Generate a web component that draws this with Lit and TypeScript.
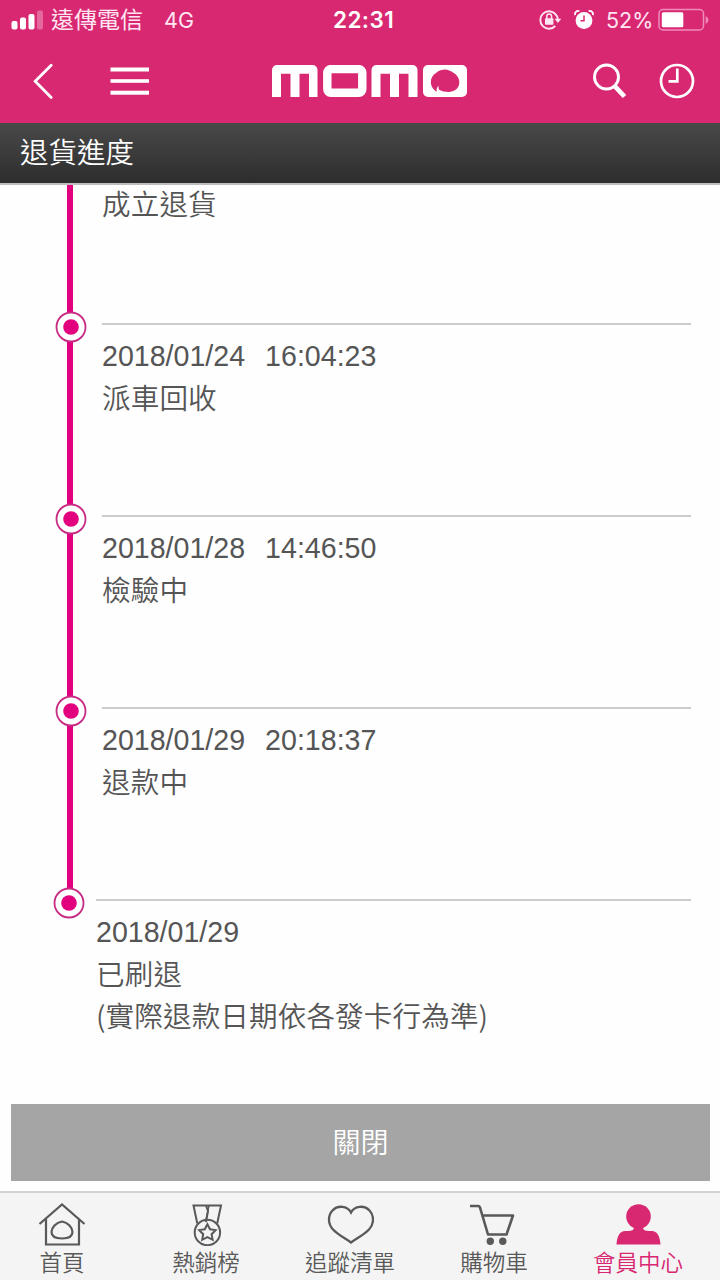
import { LitElement, html, css, svg, nothing } from "lit";
import { customElement, property } from "lit/decorators.js";

interface Step {
  date?: string;
  time?: string;
  lines: string[];
}

const STEPS: Step[] = [
  { lines: ["成立退貨"] },
  { date: "2018/01/24", time: "16:04:23", lines: ["派車回收"] },
  { date: "2018/01/28", time: "14:46:50", lines: ["檢驗中"] },
  { date: "2018/01/29", time: "20:18:37", lines: ["退款中"] },
  { date: "2018/01/29", lines: ["已刷退", "(實際退款日期依各發卡行為準)"] },
];

@customElement("status-bar")
class StatusBar extends LitElement {
  static styles = css`
    :host {
      display: grid;
      grid-template-columns: 333px 1fr auto;
      align-items: center;
      height: 40px;
      padding-right: 10px;
      color: #ffe6f2;
      font-family: Inter, "Noto Sans CJK TC", sans-serif;
      font-size: 22px;
      line-height: 40px;
      white-space: nowrap;
    }
    .left, .right { display: flex; align-items: center; height: 40px; }
    .left { padding-left: 11px; }
    .carrier { margin-left: 8px; font-size: 23px; line-height: 37px; height: 40px; font-family: "Noto Sans CJK TC", sans-serif; }
    .net { margin-left: 21px; font-size: 21.5px; }
    .clock { font-weight: 600; font-size: 22.5px; letter-spacing: 0.4px; color: #fff; }
    .lock { margin-right: 12px; }
    .alarm { margin-right: 12px; }
    .pct { width: 46px; margin-right: 6px; font-size: 21.5px; }
    svg { display: block; }
  `;
  render() {
    return html`
      <div class="left">
        <svg width="32" height="20" viewBox="0 0 32 20" fill="#fff">
          <rect x="0.5" y="11" width="6" height="8.5" rx="2" />
          <rect x="9" y="7.5" width="6" height="12" rx="2" />
          <rect x="17.5" y="4" width="6" height="15.5" rx="2" />
          <rect x="26" y="0.5" width="6" height="19" rx="2" opacity="0.3" />
        </svg>
        <span class="carrier">遠傳電信</span>
        <span class="net">4G</span>
      </div>
      <div class="clock">22:31</div>
      <div class="right">
        <svg class="lock" width="23" height="20" viewBox="0 0 23 20" fill="none" stroke="#ffe6f2" stroke-width="1.9">
          <path d="M16.5 4.2A8.7 8.7 0 1 0 16.3 16" />
          <path d="M16 3.8A8.7 8.7 0 0 1 18.8 9" />
          <path d="M15.5 8.8h6.8l-3.4 4.2z" fill="#ffe6f2" stroke="none" />
          <rect x="6" y="8.3" width="8.4" height="6.4" rx="0.6" fill="#ffe6f2" stroke="none" />
          <path d="M7.8 9V6.5a2.4 2.4 0 0 1 4.8 0V9" stroke-width="1.5" />
        </svg>
        <svg class="alarm" width="20" height="20" viewBox="0 0 20 20">
          <circle cx="10" cy="10.5" r="8.4" fill="#fff" />
          <path d="M1.3 5.2A3 3 0 0 1 5.4 1.3M18.7 5.2A3 3 0 0 0 14.6 1.3" fill="none" stroke="#fff" stroke-width="1.8" />
          <path d="M10 5.5v5.3H6.5" fill="none" stroke="#d82872" stroke-width="1.5" />
        </svg>
        <span class="pct">52%</span>
        <svg width="52" height="24" viewBox="0 0 52 24">
          <rect x="1" y="1.5" width="44.5" height="20.5" rx="4" fill="none" stroke="#f08abb" stroke-width="1.5" />
          <rect x="3.8" y="4.2" width="21.5" height="15" rx="1.5" fill="#fff" />
          <path d="M47.7 8v8q2.8-1.3 2.8-4t-2.8-4z" fill="#f08abb" />
        </svg>
      </div>
    `;
  }
}

@customElement("nav-bar")
class NavBar extends LitElement {
  static styles = css`
    :host { display: flex; align-items: center; height: 81px; padding: 0 25px 0 32px; box-sizing: border-box; }
    svg { display: block; flex: none; }
    .menu { margin-left: 56px; }
    .logo { margin-left: 122px; }
    .search { margin-left: auto; }
    .history { margin-left: 32px; }
  `;
  render() {
    return html`
      <svg width="22" height="38" viewBox="0 0 22 38" fill="none" stroke="#fff" stroke-width="2.8" stroke-linecap="round">
        <path d="M19.2 3.2 3.2 19.3 19.2 35.4" stroke-linejoin="miter" />
      </svg>
      <svg class="menu" width="40" height="30" viewBox="0 0 40 30" fill="#fff">
        <rect x="0.5" y="1.5" width="38.5" height="4" />
        <rect x="0.5" y="13.2" width="38.5" height="3.6" />
        <rect x="0.5" y="24.7" width="38.5" height="4" />
      </svg>
      <svg class="logo" width="195" height="32" viewBox="0 0 195 32" fill="#fff">
        <path d="M0 32V5a5 5 0 0 1 5-5H40.5a5 5 0 0 1 5 5V32H37V8.8H27.5V32H18.5V8.8H9V32z" />
        <path d="M99.5 32V5a5 5 0 0 1 5-5H140.500a5 5 0 0 1 5 5V32H136.5V8.8H127V32H118V8.8H108.5V32z" />
        <rect x="55.3" y="4.1" width="35" height="23.6" rx="3.5" fill="none" stroke="#fff" stroke-width="8.4" />
        <path fill-rule="evenodd"
          d="M156 0h34a5 5 0 0 1 5 5v22a5 5 0 0 1-5 5h-34a5 5 0 0 1-5-5v-22a5 5 0 0 1 5-5zM164.8 26.8C161.5 24.800 158.800 21.200 158.800 17C158.800 13 161 9.800 164 8C167 5.500 170 4.600 173 4.600C176 4.800 178.500 6 181 7.500C185 9.700 187.300 13 187.300 17.500C187.300 23.500 182 27 176.500 27C173.500 27 169 26.200 166.800 24.500C166.600 23.300 166.600 22 166.400 20.800C165 22.500 164.200 24.300 164.800 26.800z" />
      </svg>
      <svg class="search" width="34" height="36" viewBox="0 0 34 36" fill="none" stroke="#fff">
        <circle cx="13.5" cy="14" r="12" stroke-width="2.900" />
        <path d="M21.5 22.8 31.500 33.500" stroke-width="4.700" />
      </svg>
      <svg class="history" width="36" height="36" viewBox="0 0 36 36" fill="none" stroke="#fff">
        <circle cx="18" cy="18" r="16" stroke-width="2.700" />
        <path d="M18.300 5.500V18.300H9.500" stroke-width="2.700" />
      </svg>
    `;
  }
}

@customElement("progress-step")
class ProgressStep extends LitElement {
  @property({ attribute: false }) step: Step = { lines: [] };
  @property({ type: Boolean, reflect: true }) first = false;
  @property({ type: Boolean, reflect: true }) last = false;

  static styles = css`
    :host {
      display: grid;
      grid-template-columns: 102px 1fr;
      height: 192px;
      padding-right: 29px;
      position: relative;
      box-sizing: border-box;
      color: #555;
      font-family: "Liberation Sans", "Noto Sans CJK TC", sans-serif;
      font-size: 28.6px;
      line-height: 42px;
      white-space: nowrap;
    }
    :host([first]) { height: 138px; }
    :host([last]) { grid-template-columns: 96px 1fr; height: 205px; }
    .rail { width: 6px; margin-left: 67px; background: #e2007f; }
    :host([last]) .rail { height: 4px; }
    .dot {
      position: absolute;
      left: 55px;
      top: -12px;
      z-index: 1;
    }
    :host([last]) .dot { left: 53px; }
    .body { border-top: 2px solid #ccc; padding-top: 9px; }
    :host([first]) .body { border: 0; padding: 0; margin-top: -3px; }
    .when, .line { height: 42px; }
    .when { line-height: 44px; }
    .line { font-family: "Noto Sans CJK TC", sans-serif; font-weight: 350; letter-spacing: 0.1px; }
    .time { margin-left: 20px; }
  `;
  render() {
    const s = this.step;
    return html`
      <div class="rail"></div>
      ${this.first
        ? nothing
        : html`<svg class="dot" width="32" height="32" viewBox="0 0 32 32">
            <circle cx="16" cy="16" r="14.500" fill="#fff" stroke="#c72b83" stroke-width="1.800" />
            <circle cx="16" cy="16" r="7.800" fill="#e2007f" />
          </svg>`}
      <div class="body">
        ${s.date
          ? html`<div class="when"><span>${s.date}</span>${s.time ? html`<span class="time">${s.time}</span>` : nothing}</div>`
          : nothing}
        ${s.lines.map((l) => html`<div class="line">${l}</div>`)}
      </div>
    `;
  }
}

const ICONS = [
  svg`<g stroke-width="2.200"><path d="M1.500 22 24 2.500 46.500 22" /><path d="M8 17v25.500h33V17" /><path d="M24 19.500C30 20.500 34.500 25.500 34.500 30C34.500 34.500 30 36.500 24 36.500S13.500 34.500 13.500 30C13.500 25.500 18 20.500 24 19.500z" /></g>`,
  svg`<g stroke-width="2" transform="translate(1 0)"><path d="M14.300 21.500 10.500 3.500H38L34.200 21.500M23 3.500 25 9 23 20" /><path d="M26 3.500 22.500 20" stroke-width="1.400" /><circle cx="24.400" cy="30.500" r="12.700" /><path d="M24.400 22.200 27 27.300 32.600 28.100 28.600 32.200 29.600 37.800 24.400 35.200 19.200 37.800 20.200 32.200 16.200 28.100 21.800 27.300z" /></g>`,
  svg`<path stroke-width="2.300" d="M25 10.500C21.500 3.500 11.500 3 6.500 8.500C1.500 14 2 22 7 27.500C12 32.800 19.500 36.500 25 40.500C30.500 36.500 38 32.800 43 27.500C48 22 48.500 14 43.500 8.500C38.500 3 28.500 3.500 25 10.500z" />`,
  svg`<g stroke-width="2.600" stroke-linejoin="round" transform="translate(-2.500 -0.500)"><path d="M1.500 4.500H10.500Q12 4.500 12.500 6L20.500 33H39L45.500 14H15" /><g fill="#595959" stroke="none"><circle cx="22.800" cy="39.800" r="3.700" /><circle cx="35.300" cy="39.800" r="3.700" /></g></g>`,
  svg`<g fill="#d82872" stroke="none"><circle cx="24.500" cy="14.500" r="12.300" /><path d="M20 24h9v1.500Q29 29 35 29H38C43 29 46 34 46.500 42.500H2.500C3 34 6 29 11 29H14Q20 29 20 25.500z" /></g>`,
];
const LABELS = ["首頁", "熱銷榜", "追蹤清單", "購物車", "會員中心"];

@customElement("tab-bar")
class TabBar extends LitElement {
  static styles = css`
    :host {
      display: grid;
      grid-template-columns: repeat(5, 144px);
      height: 89px;
      box-sizing: border-box;
      border-top: 2px solid #d2d2d2;
      background: #f4f4f4;
      overflow: hidden;
      font-family: "Noto Sans CJK TC", sans-serif;
      font-weight: 350;
      font-size: 22.5px;
      line-height: 30px;
      color: #595959;
    }
    .tab { display: flex; flex-direction: column; align-items: center; padding: 8.500px 20px 0 0; white-space: nowrap; }
    .tab.active { color: #d82872; }
    .tab svg { flex: none; }
    .label { margin-top: 0.500px; }
  `;
  render() {
    return html`${LABELS.map(
      (label, i) => html`<div class="tab ${i === 4 ? "active" : ""}">
        <svg width="48" height="44" viewBox="0 0 48 44" fill="none" stroke="#595959">${ICONS[i]}</svg>
        <span class="label">${label}</span>
      </div>`
    )}`;
  }
}

@customElement("app-root")
class AppRoot extends LitElement {
  static styles = css`
    :host { display: flex; flex-direction: column; width: 720px; height: 1280px; overflow: hidden; background: #fefefe; }
    header { background: #d82872; height: 123px; flex: none; }
    .title {
      flex: none;
      height: 62px;
      box-sizing: border-box;
      border-bottom: 2px solid #bdbdbd;
      padding-left: 20px;
      background: linear-gradient(#494949, #2d2d2d);
      color: #fff;
      font: 350 28.500px/55px "Noto Sans CJK TC", sans-serif;
    }
    .steps { flex: none; height: 919px; }
    .close {
      flex: none;
      height: 77px;
      margin: 0 10px 10px 11px;
      border: 0;
      padding: 0 0 2px;
      background: #a5a5a5;
      color: #fff;
      font: 350 28px/75px "Noto Sans CJK TC", sans-serif;
      text-align: center;
    }
    tab-bar { flex: none; }
  `;
  render() {
    return html`
      <header><status-bar></status-bar><nav-bar></nav-bar></header>
      <div class="title">退貨進度</div>
      <div class="steps">
        ${STEPS.map(
          (s, i) => html`<progress-step .step=${s} ?first=${i === 0} ?last=${i === STEPS.length - 1}></progress-step>`
        )}
      </div>
      <button class="close">關閉</button>
      <tab-bar></tab-bar>
    `;
  }
}
